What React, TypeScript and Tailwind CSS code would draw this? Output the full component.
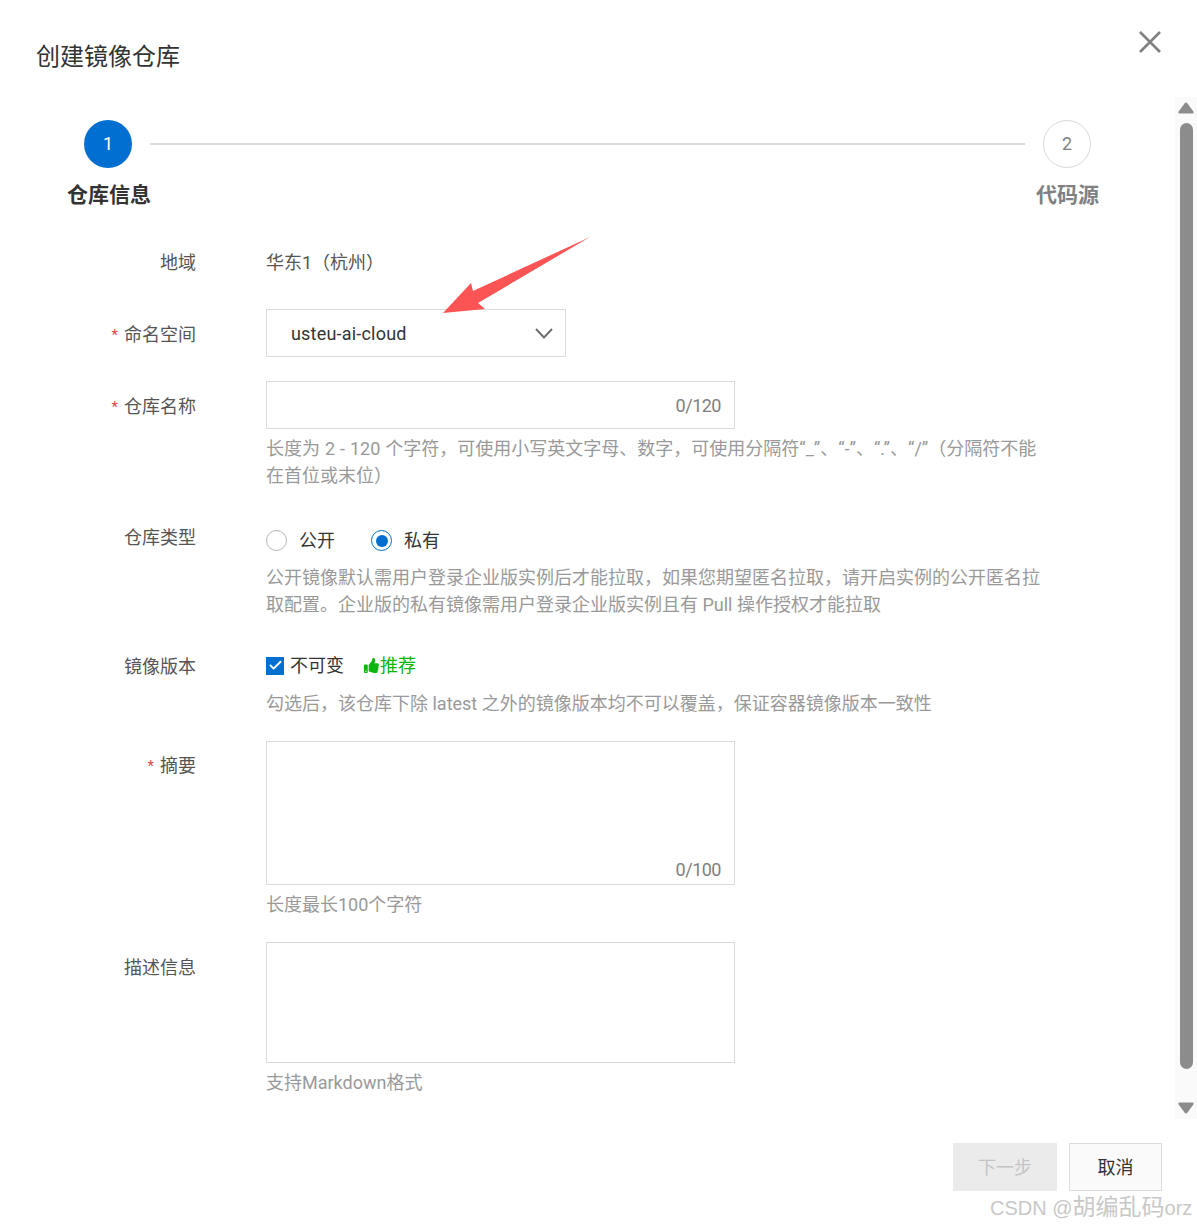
import { Check } from 'lucide-react';
import { FaThumbsUp } from 'react-icons/fa';

const fontStack = 'font-["Roboto","Noto_Sans_CJK_SC",sans-serif] [text-spacing-trim:space-all]';

function Row({ label, required, top, labelTop, children }: {
  label: string;
  required?: boolean;
  top: string;
  labelTop: string;
  children: React.ReactNode;
}) {
  return (
    <div className={`flex ${top}`}>
      <div className={`w-[196px] shrink-0 text-right text-[18px] leading-[27px] text-[#555] ${labelTop}`}>
        {required && <span className="mr-[6px] align-[1px] text-[15px] text-[#e54545]">*</span>}
        {label}
      </div>
      <div className="ml-[70px] w-[780px]">{children}</div>
    </div>
  );
}

function Help({ children, className = '' }: { children: React.ReactNode; className?: string }) {
  return <p className={`text-[18px] leading-[27px] text-[#999] ${className}`}>{children}</p>;
}

export default function App() {
  return (
    <div className={`relative flex h-[1227px] w-[1197px] flex-col overflow-hidden bg-white ${fontStack}`}>
      <header className="flex h-[97px] shrink-0 justify-between pl-[36px] pr-[35px]">
        <h1 className="mt-[39px] text-[24px] leading-[36px] text-[#333]">创建镜像仓库</h1>
        <button className="mt-[30px] h-[24px] w-[24px] text-[#808080]">
          <svg viewBox="0 0 24 24" className="h-[24px] w-[24px]" fill="none" stroke="currentColor" strokeWidth="2.6">
            <path d="M2 2 L22 22 M22 2 L2 22" />
          </svg>
        </button>
      </header>

      <div className="flex h-[1022px] shrink-0">
        <main className="w-[1175px] shrink-0">
          <div className="ml-[67px] mt-[23px] w-[1032px]">
            <div className="flex items-center pl-[17px] pr-[8px]">
              <div className="flex h-[48px] w-[48px] items-center justify-center rounded-full bg-[#006fcf] pb-[2px] text-[18px] text-white">1</div>
              <div className="ml-[18px] mr-[18px] h-[2px] flex-1 bg-[#dcdcdc]" />
              <div className="flex h-[48px] w-[48px] items-center justify-center rounded-full border border-[#d9d9d9] pb-[2px] text-[18px] text-[#808080]">2</div>
            </div>
            <div className="mt-[11px] flex justify-between text-[21px] font-bold leading-[32px]">
              <span className="text-[#333]">仓库信息</span>
              <span className="text-[#808080]">代码源</span>
            </div>
          </div>

          <Row label="地域" top="mt-[38px]" labelTop="pt-0">
            <div className="text-[18px] leading-[27px] text-[#555]">华东1（杭州）</div>
          </Row>

          <Row label="命名空间" required top="mt-[33px]" labelTop="pt-[12px]">
            <div className="flex h-[48px] w-[300px] items-center justify-between border border-[#d9d9d9] pl-[24px] pr-[12px] text-[18px] text-[#333]">
              <span className="mt-px tracking-[0.2px]">usteu-ai-cloud</span>
              <svg viewBox="0 0 18 11" className="h-[11px] w-[18px] text-[#707070]" fill="none" stroke="currentColor" strokeWidth="2">
                <path d="M1 1 L9 9.5 L17 1" />
              </svg>
            </div>
          </Row>

          <Row label="仓库名称" required top="mt-[24px]" labelTop="pt-[12px]">
            <div className="flex h-[48px] w-[469px] items-center justify-end border border-[#d9d9d9] pr-[13px] text-[18px] tracking-[-0.5px] text-[#808080]">0/120</div>
            <Help className="mt-[6px] w-[780px] [word-spacing:0.5px]">
              长度为 2 - 120 个字符，可使用小写英文字母、数字，可使用分隔符“_”、“-”、“.”、“/”（分隔符不能在首位或末位）
            </Help>
          </Row>

          <Row label="仓库类型" top="mt-[37px]" labelTop="-mt-[2px]">
            <div className="flex h-[27px] items-center text-[18px] text-[#333]">
              <span className="mt-[2px] h-[21px] w-[21px] rounded-full border border-[#b3b3b3]" />
              <span className="ml-[12px] mt-[2px]">公开</span>
              <span className="ml-[36px] mt-[2px] flex h-[21px] w-[21px] items-center justify-center rounded-full border border-[#006fcf]">
                <span className="h-[12px] w-[12px] rounded-full bg-[#006fcf]" />
              </span>
              <span className="ml-[12px] mt-[2px]">私有</span>
            </div>
            <Help className="mt-[11px] w-[780px]">
              公开镜像默认需用户登录企业版实例后才能拉取，如果您期望匿名拉取，请开启实例的公开匿名拉取配置。企业版的私有镜像需用户登录企业版实例且有 Pull 操作授权才能拉取
            </Help>
          </Row>

          <Row label="镜像版本" top="mt-[34px]" labelTop="pt-[1px]">
            <div className="flex h-[27px] items-center text-[18px] text-[#333]">
              <span className="flex h-[18px] w-[18px] items-center justify-center bg-[#006fcf]">
                <Check className="h-[15px] w-[15px] text-white" strokeWidth={3} />
              </span>
              <span className="ml-[6px]">不可变</span>
              <FaThumbsUp className="ml-[20px] h-[15px] w-[15px] text-[#0cb50c]" />
              <span className="ml-px text-[#0cb50c]">推荐</span>
            </div>
            <Help className="mt-[11px]">勾选后，该仓库下除 latest 之外的镜像版本均不可以覆盖，保证容器镜像版本一致性</Help>
          </Row>

          <Row label="摘要" required top="mt-[24px]" labelTop="pt-[11px]">
            <div className="flex h-[144px] w-[469px] items-end justify-end border border-[#d9d9d9] pb-[1px] pr-[13px] text-[18px] leading-[27px] tracking-[-0.5px] text-[#808080]">0/100</div>
            <Help className="mt-[6px]">长度最长100个字符</Help>
          </Row>

          <Row label="描述信息" top="mt-[24px]" labelTop="pt-[12px]">
            <div className="h-[121px] w-[469px] border border-[#d9d9d9]" />
            <Help className="mt-[6px]">支持Markdown格式</Help>
          </Row>
        </main>

        <aside className="flex w-[22px] shrink-0 flex-col items-center bg-[#fafafa]">
          <svg viewBox="0 0 16 12" className="mt-[5px] h-[12px] w-[16px] text-[#8c8c8c]" fill="currentColor">
            <path d="M8 0.5 Q8.8 0.5 9.5 1.5 L15.4 9.5 Q16.2 11.5 14.5 11.5 L1.5 11.5 Q-0.2 11.5 0.6 9.5 L6.5 1.5 Q7.2 0.5 8 0.5 Z" />
          </svg>
          <div className="mt-[9px] h-[946px] w-[13px] rounded-full bg-[#8c8c8c]" />
          <svg viewBox="0 0 16 12" className="mt-[33px] h-[12px] w-[16px] rotate-180 text-[#8c8c8c]" fill="currentColor">
            <path d="M8 0.5 Q8.8 0.5 9.5 1.5 L15.4 9.5 Q16.2 11.5 14.5 11.5 L1.5 11.5 Q-0.2 11.5 0.6 9.5 L6.5 1.5 Q7.2 0.5 8 0.5 Z" />
          </svg>
        </aside>
      </div>

      <footer className="flex justify-end gap-[12px] pr-[35px] pt-[24px]">
        <button className="h-[48px] w-[104px] bg-[#ebebeb] text-[18px] text-[#c4c4c4]">下一步</button>
        <button className="h-[48px] w-[93px] border border-[#dcdcdc] bg-[#fafafa] text-[18px] text-[#333]">取消</button>
      </footer>

      <svg viewBox="0 0 1197 1227" className="pointer-events-none absolute left-0 top-0 h-[1227px] w-[1197px]">
        <polygon points="590,237 473,291 471,283 443,313 485,309 478,303" fill="#fc5454" />
      </svg>

      <div className='pointer-events-none absolute left-[990px] top-[1193px] whitespace-nowrap font-["Liberation_Sans","Noto_Sans_CJK_SC",sans-serif] text-[20px] leading-[28px] text-[#c8c8c8]'>
        CSDN @<span className="text-[23px]">胡编乱码</span>orz
      </div>
    </div>
  );
}
